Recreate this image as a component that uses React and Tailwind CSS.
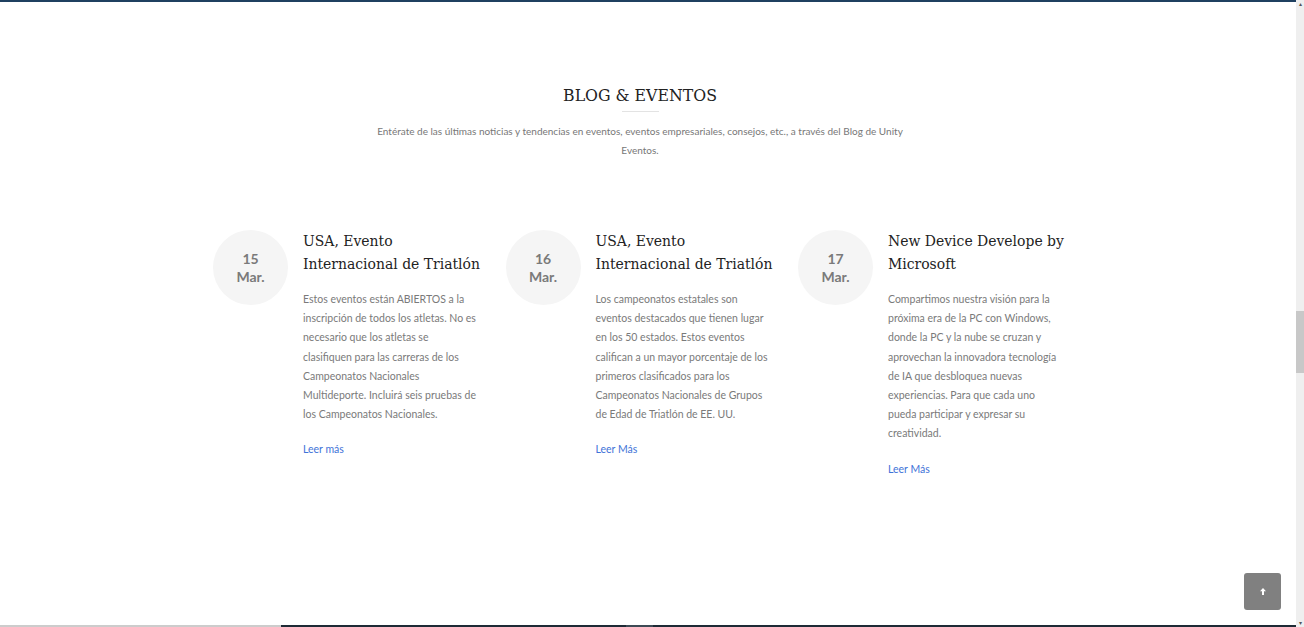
import React from "react";

const posts = [
  {
    day: "15",
    title: "USA, Evento Internacional de Triatlón",
    body: "Estos eventos están ABIERTOS a la inscripción de todos los atletas. No es necesario que los atletas se clasifiquen para las carreras de los Campeonatos Nacionales Multideporte. Incluirá seis pruebas de los Campeonatos Nacionales.",
    link: "Leer más",
  },
  {
    day: "16",
    title: "USA, Evento Internacional de Triatlón",
    body: "Los campeonatos estatales son eventos destacados que tienen lugar en los 50 estados. Estos eventos califican a un mayor porcentaje de los primeros clasificados para los Campeonatos Nacionales de Grupos de Edad de Triatlón de EE. UU.",
    link: "Leer Más",
  },
  {
    day: "17",
    title: "New Device Develope by Microsoft",
    body: "Compartimos nuestra visión para la próxima era de la PC con Windows, donde la PC y la nube se cruzan y aprovechan la innovadora tecnología de IA que desbloquea nuevas experiencias. Para que cada uno pueda participar y expresar su creatividad.",
    link: "Leer Más",
  },
];

const serif = { fontFamily: "'DejaVu Serif Condensed', 'DejaVu Serif', serif", fontStretch: "condensed" };
const sans = { fontFamily: "Lato, sans-serif" };

export default function App() {
  return (
    <div className="relative flex h-[627px] w-[1304px] overflow-hidden bg-white">
      <div className="flex w-[1296px] flex-col">
        <div className="h-[2px] w-full bg-[#1f4060]" />
        <div className="flex flex-1 flex-col">
          <div className="flex flex-col items-center pt-[83px] pr-[16px]">
            <h2 className="text-[17.5px] leading-[20px] text-[#222]" style={serif}>
              BLOG &amp; EVENTOS
            </h2>
            <div className="mt-[6px] h-px w-[37px] bg-[#e3e3e3]" />
            <p className="mt-[10px] w-[540px] text-center text-[10px] leading-[19px] text-[#777]" style={sans}>
              Entérate de las últimas noticias y tendencias en eventos, eventos empresariales, consejos, etc., a través del Blog de Unity Eventos.
            </p>
          </div>
          <div className="mt-[70px] flex pl-[213px]">
            {posts.map((p, i) => (
              <div key={i} className="flex w-[292.5px]">
                <div className="flex h-[75px] w-[75px] shrink-0 flex-col items-center justify-center rounded-full bg-[#f5f5f5] text-[14px] font-bold leading-[18px] text-[#7a7a7a]" style={sans}>
                  <span>{p.day}</span>
                  <span>Mar.</span>
                </div>
                <div className="ml-[15px] w-[174px]">
                  <h3 className="w-[181px] text-[15.5px] leading-[23px] text-[#222]" style={serif}>
                    {p.title}
                  </h3>
                  <p className="mt-[14px] text-[10.5px] leading-[19.2px] text-[#7a7a7a]" style={sans}>
                    {p.body}
                  </p>
                  <a className="mt-[16px] block text-[10.5px] leading-[19px] text-[#3f73d8]" style={sans}>
                    {p.link}
                  </a>
                </div>
              </div>
            ))}
          </div>
        </div>
        <div className="flex h-[2px] w-full">
          <div className="w-[281px] bg-[#cccccc]" />
          <div className="w-[345px] bg-[#1e2a35]" />
          <div className="w-[27px] bg-[#3d4a55]" />
          <div className="flex-1 bg-[#1e2a35]" />
        </div>
      </div>
      <div className="relative flex w-[8px] flex-col bg-[#efefef]">
        <div className="flex h-[8px] items-center justify-center text-[6px] leading-none text-[#555]">▴</div>
        <div className="mt-[303px] h-[62px] w-full bg-[#c8c8c8]" />
        <div className="flex-1" />
        <div className="flex h-[8px] items-center justify-center text-[6px] leading-none text-[#555]">▾</div>
      </div>
      <button className="absolute left-[1244px] top-[573px] flex h-[37px] w-[37px] items-center justify-center rounded-[3px] bg-[#808080]">
        <svg width="6" height="7" viewBox="0 0 6 7">
          <path d="M3 0 L6 3.2 H4 V7 H2 V3.2 H0 Z" fill="#fff" />
        </svg>
      </button>
    </div>
  );
}
